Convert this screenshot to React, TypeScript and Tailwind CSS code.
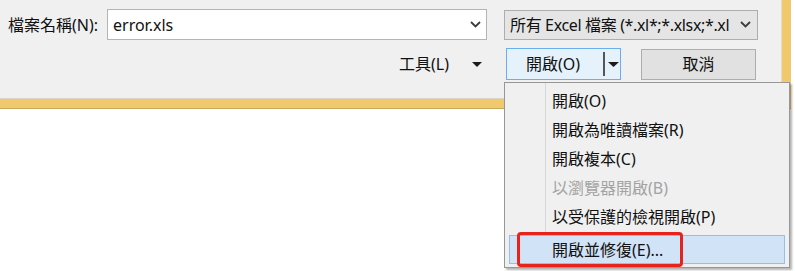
import React from 'react';

const FONT = { fontFamily: '"Noto Sans", "Noto Sans CJK TC", sans-serif' };

const Chevron: React.FC = () => (
  <svg width="11" height="7" viewBox="0 0 11 7" className="shrink-0">
    <polyline points="1,1 5.5,5.5 10,1" fill="none" stroke="#3c3c3c" strokeWidth="1.8" />
  </svg>
);

const Caret: React.FC<{ w?: number }> = ({ w = 10 }) => (
  <svg width={w} height="5" viewBox={`0 0 ${w} 5`} className="shrink-0">
    <polygon points={`0,0 ${w},0 ${w / 2},5`} fill="#1a1a1a" />
  </svg>
);

const menuItems = [
  { label: '開啟(O)' },
  { label: '開啟為唯讀檔案(R)' },
  { label: '開啟複本(C)' },
  { label: '以瀏覽器開啟(B)', disabled: true },
  { label: '以受保護的檢視開啟(P)' },
];

export default function App() {
  return (
    <div className="relative w-[795px] h-[271px] bg-white overflow-hidden text-[16px] text-[#111]" style={FONT}>
      {/* Dialog with golden frame */}
      <div className="w-[791px] bg-[#f0c96c] flex flex-col">
        <div className="flex">
          <div className="w-[782px] h-[98px] bg-[#f0f0f0] border-r border-[#e2dccb]">
            {/* File name row */}
            <div className="flex items-center mt-[9px] h-[31px]">
              <span className="ml-[8px] w-[99px] leading-none whitespace-nowrap">檔案名稱(N):</span>
              <div className="w-[380px] h-[31px] bg-white border border-[#b4b4b4] flex items-center pl-[5px] pr-[5px]">
                <span className="flex-1 leading-none">error.xls</span>
                <Chevron />
              </div>
              <div className="ml-[17px] w-[254px] h-[30px] bg-[#e5e5e5] border border-[#adadad] flex items-center pl-[5px] pr-[6px]">
                <span className="flex-1 whitespace-nowrap leading-none tracking-[-0.35px]">所有 Excel 檔案 (*.xl*;*.xlsx;*.xl</span>
                <span className="ml-[6px]"><Chevron /></span>
              </div>
            </div>
            {/* Buttons row */}
            <div className="flex items-center mt-[8px] h-[32px]">
              <div className="ml-[399px] w-[107px] flex items-center">
                <span className="leading-none whitespace-nowrap">工具(L)</span>
                <span className="ml-[23px]"><Caret w={10} /></span>
              </div>
              <div className="w-[115px] h-[32px] bg-[#e5f1fb] border border-[#69aff0] flex items-center">
                <span className="ml-[19px] w-[77px] leading-none whitespace-nowrap">開啟(O)</span>
                <span className="w-[2px] h-[24px] bg-[#555]" />
                <span className="ml-[3px]"><Caret w={11} /></span>
              </div>
              <div className="ml-[20px] w-[115px] h-[31px] bg-[#e1e1e1] border border-[#adadad] flex items-center justify-center">
                <span className="leading-none">取消</span>
              </div>
            </div>
          </div>
        </div>
        <div className="h-[11px] border-t border-[#d9d4c6] border-b border-b-[#caa75e]" />
      </div>

      {/* Split button dropdown menu */}
      <div className="absolute left-[504px] top-[82px] w-[286px] h-[186px] bg-[#f0f0f0] border border-[#979797] shadow-[2px_2px_2px_rgba(0,0,0,0.3)]">
        <div className="absolute left-[40px] top-0 bottom-0 w-px bg-[#d7d7d7]" />
        <div className="relative flex flex-col pt-[3px]">
          {menuItems.map((item) => (
            <div key={item.label} className="h-[29px] flex items-center pl-[47px]">
              <span className={`leading-none whitespace-nowrap ${item.disabled ? 'text-[#a3a3a3]' : ''}`}>
                {item.label}
              </span>
            </div>
          ))}
          <div className="mt-[4px] mx-[4px] h-[29px] bg-[#d1e3f6] border border-[#92c0ee] flex items-center pl-[42px]">
            <span className="leading-none whitespace-nowrap">開啟並修復(E)...</span>
          </div>
        </div>
      </div>

      {/* Red annotation box */}
      <div className="absolute left-[517px] top-[232px] w-[166px] h-[35px] border-[3px] border-[#e8231c] rounded-[4px]" />
    </div>
  );
}
